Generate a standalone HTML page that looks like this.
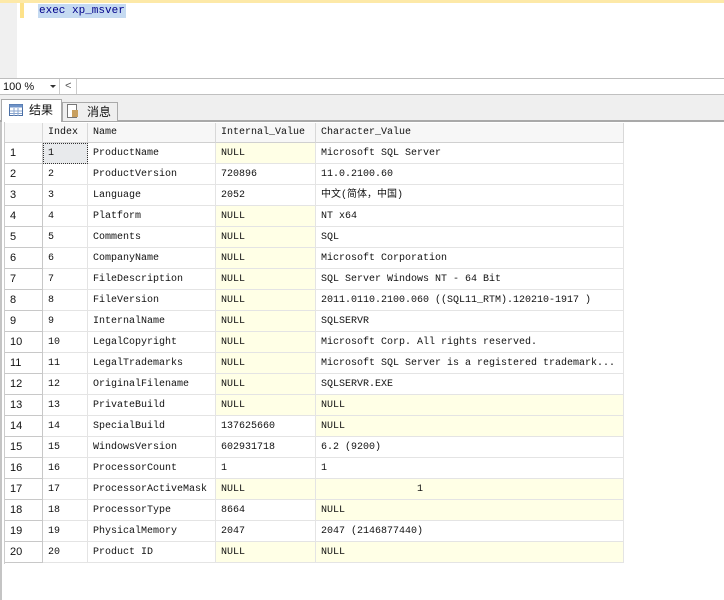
<!DOCTYPE html>
<html><head><meta charset="utf-8"><style>
*{margin:0;padding:0;box-sizing:border-box}
body{width:724px;height:600px;overflow:hidden;background:#fff;position:relative;font-family:"Liberation Mono","Noto Sans CJK SC",monospace;font-size:10px;color:#111}
.a{position:absolute}
.c{position:absolute;height:21px;line-height:21px;padding-left:5px;border-right:1px solid #e4e4e4;border-bottom:1px solid #e4e4e4;white-space:nowrap;overflow:hidden}
.y{background:#ffffe6}
.h{background:#f7f7f7;border-right:1px solid #d8d8d8;border-bottom:1px solid #d0d0d0;height:20px;line-height:20px}
.r{border-right:1px solid #c8c8c8;border-bottom:1px solid #c8c8c8;font-family:"Liberation Sans",sans-serif;font-size:11px}
</style></head><body>
<div class="a" style="left:0;top:0;width:724px;height:3px;background:#fde9a8"></div>
<div class="a" style="left:0;top:3px;width:17px;height:75px;background:#f0f0f0"></div>
<div class="a" style="left:20px;top:3px;width:4px;height:15px;background:#fde28a"></div>
<div class="a" style="left:38px;top:4px;height:14px;line-height:14px;padding:0 1px;background:#c5daf1;color:#00008b;font-size:11px">exec xp_msver</div>
<div class="a" style="left:0;top:78px;width:724px;height:1px;background:#bdbdbd"></div>
<div class="a" style="left:3px;top:79px;font-family:'Liberation Sans',sans-serif;font-size:11px;line-height:16px">100 %</div>
<div class="a" style="left:50px;top:85px;border-left:3px solid transparent;border-right:3px solid transparent;border-top:3px solid #333"></div>
<div class="a" style="left:59px;top:79px;width:1px;height:15px;background:#ccc"></div>
<div class="a" style="left:65px;top:79px;font-size:11px;line-height:16px;color:#555">&lt;</div>
<div class="a" style="left:76px;top:79px;width:1px;height:15px;background:#ccc"></div>
<div class="a" style="left:0;top:94px;width:724px;height:1px;background:#c0c0c0"></div>
<div class="a" style="left:0;top:95px;width:724px;height:26px;background:#efefef"></div>
<div class="a" style="left:0;top:120px;width:724px;height:2px;background:#a9a9a9"></div>
<div class="a" style="left:1px;top:99px;width:61px;height:23px;background:#fff;border:1px solid #aaa;border-bottom:none"></div>
<div class="a" style="left:62px;top:102px;width:56px;height:19px;background:#efefef;border:1px solid #aaa;border-bottom:none"></div>
<svg class="a" style="left:9px;top:104px" width="14" height="12"><rect x=".5" y=".5" width="13" height="11" fill="#fff" stroke="#4a6fa5"/><rect x=".5" y=".5" width="13" height="3" fill="#6f93c8"/><path d="M5 4v8M9 4v8M1 7h12M1 9.5h12" stroke="#8aa6cf"/></svg>
<div class="a" style="left:29px;top:101px;font-family:'Noto Sans CJK SC',sans-serif;font-size:12px;line-height:18px">结果</div>
<svg class="a" style="left:67px;top:104px" width="12" height="14"><rect x=".5" y=".5" width="9" height="13" fill="#fff" stroke="#777"/><rect x="5" y="6" width="6" height="7" fill="#c8a060"/></svg>
<div class="a" style="left:87px;top:103px;font-family:'Noto Sans CJK SC',sans-serif;font-size:12px;line-height:18px">消息</div>
<div class="a" style="left:0;top:122px;width:2px;height:478px;background:#c4c4c4"></div>
<div class="a" style="left:4px;top:122px;width:620px;height:442px;border-left:1px solid #ccc"></div>
<div id="g"></div>
<script>
var cols=[[5,38],[43,45],[88,128],[216,100],[316,308]];
var hd=["","Index","Name","Internal_Value","Character_Value"];
var d=[["ProductName","NULL","Microsoft SQL Server",1,0],["ProductVersion","720896","11.0.2100.60",0,0],["Language","2052","中文(简体，中国)",0,0],["Platform","NULL","NT x64",1,0],["Comments","NULL","SQL",1,0],["CompanyName","NULL","Microsoft Corporation",1,0],["FileDescription","NULL","SQL Server Windows NT - 64 Bit",1,0],["FileVersion","NULL","2011.0110.2100.060 ((SQL11_RTM).120210-1917 )",1,0],["InternalName","NULL","SQLSERVR",1,0],["LegalCopyright","NULL","Microsoft Corp. All rights reserved.",1,0],["LegalTrademarks","NULL","Microsoft SQL Server is a registered trademark...",1,0],["OriginalFilename","NULL","SQLSERVR.EXE",1,0],["PrivateBuild","NULL","NULL",1,1],["SpecialBuild","137625660","NULL",0,1],["WindowsVersion","602931718","6.2 (9200)",0,0],["ProcessorCount","1","1",0,0],["ProcessorActiveMask","NULL","                1",1,1],["ProcessorType","8664","NULL",0,1],["PhysicalMemory","2047","2047 (2146877440)",0,0],["Product ID","NULL","NULL",1,1]];
var h="";
for(var j=0;j<5;j++)h+='<div class="c h" style="left:'+cols[j][0]+'px;top:123px;width:'+cols[j][1]+'px">'+hd[j]+'</div>';
for(var i=0;i<20;i++){var t=143+i*21,r=d[i];
var v=[i+1,i+1,r[0],r[1],r[2]];
for(var j=0;j<5;j++){var cl="c"+(j==0?" r":"")+((j==3&&r[3])||(j==4&&r[4])?" y":"");
var st="left:"+cols[j][0]+"px;top:"+t+"px;width:"+cols[j][1]+"px";
if(i==0&&j==1)st+=";outline:1px dotted #333;outline-offset:-1px;background:#e8eaec";
h+='<div class="'+cl+'" style="'+st+'">'+String(v[j]).replace(/ /g,"&nbsp;")+'</div>';}}
document.getElementById("g").innerHTML=h;
</script>
</body></html>
